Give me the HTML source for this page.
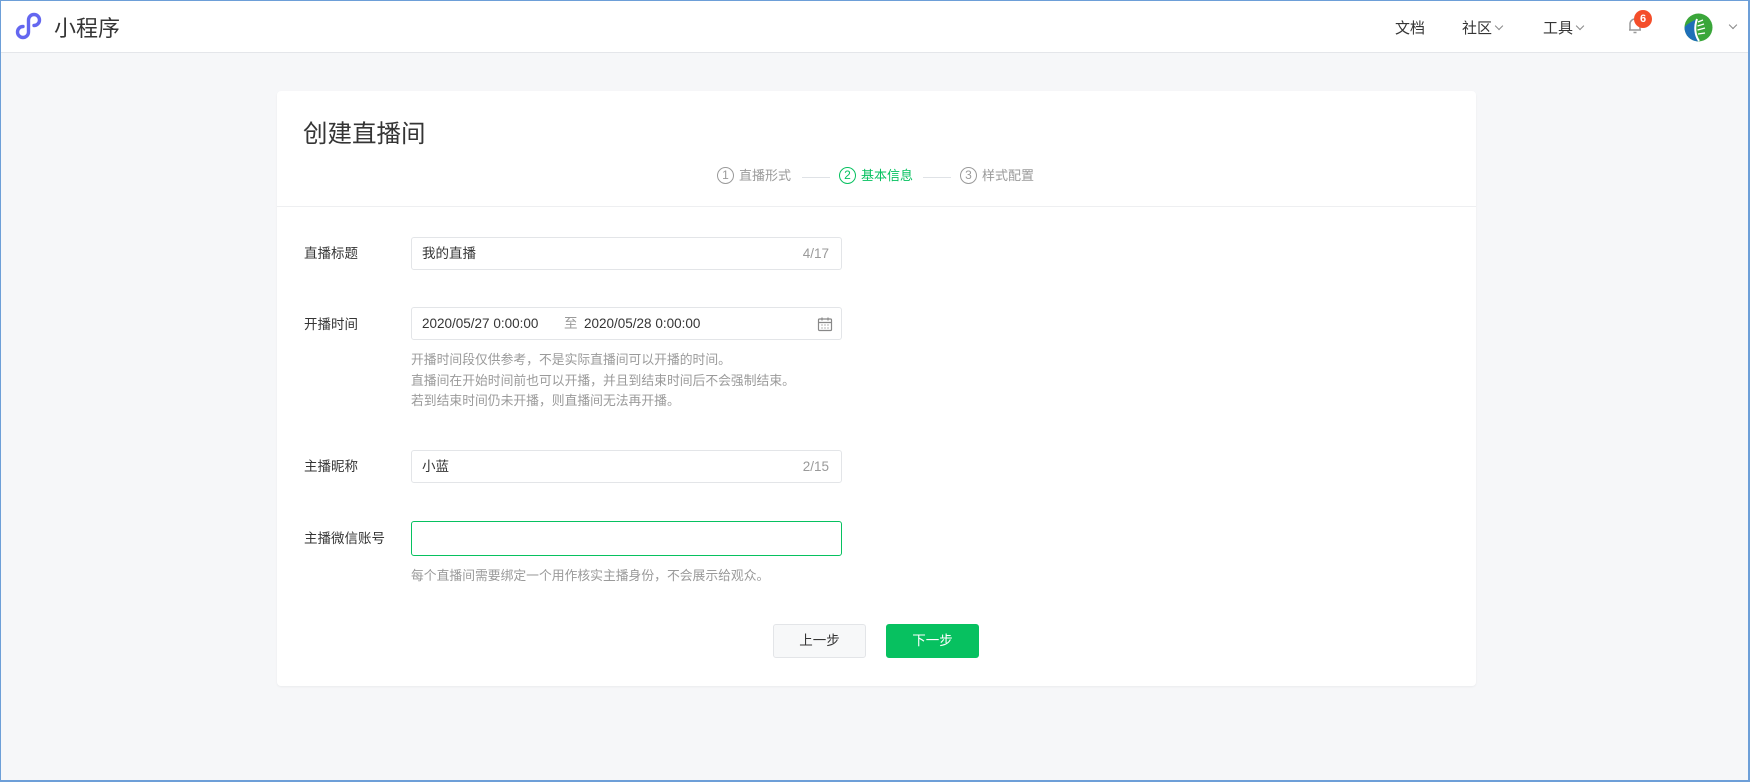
<!DOCTYPE html>
<html><head><meta charset="utf-8"><style>
*{box-sizing:border-box;margin:0;padding:0}
body{width:1750px;height:782px;overflow:hidden;background:#f6f7f9;font-family:"Liberation Sans","Noto Sans CJK SC",sans-serif;color:#353535;position:relative}
.frame{position:absolute;inset:0;border:1px solid #6d9fd8;border-right-width:2px;border-bottom-width:2px;pointer-events:none;z-index:5}
.hd{position:absolute;left:0;top:0;width:1750px;height:53px;background:#fff;border-bottom:1px solid #e4e6ea}
.a{position:absolute;white-space:nowrap}
.nav{font-size:15px;color:#353535;top:17px}
.chev{display:inline-block;width:6px;height:6px;border-right:1px solid #888;border-bottom:1px solid #888;transform:rotate(45deg);margin-left:4px;vertical-align:4px}
.card{position:absolute;left:277px;top:91px;width:1199px;height:595px;background:#fff;border-radius:4px;box-shadow:0 1px 2px rgba(0,0,0,.05)}
.lbl{font-size:13.5px;color:#353535}
.inp{position:absolute;left:411px;width:431px;height:33px;border:1px solid #e3e5e8;border-radius:3px;background:#fff;font-size:13.5px;line-height:31px;padding-left:10px}
.cnt{position:absolute;right:12px;top:0;color:#9a9a9a;font-size:13.5px}
.help{font-size:12.8px;color:#9a9a9a;line-height:20.5px;left:411px}
.step{font-size:13px;color:#9a9a9a;top:167px;line-height:18px}
.circ{display:inline-block;width:17px;height:17px;border:1px solid #9a9a9a;border-radius:50%;font-size:12px;line-height:15px;text-align:center;margin-right:5px;vertical-align:top}
.ln{position:absolute;top:177px;height:1px;background:#dfe2e6;width:28px}
.btn{position:absolute;top:624px;width:93px;height:34px;border-radius:3px;font-size:13.5px;line-height:32px;text-align:center}
</style></head><body>
<div class="frame"></div>
<div class="hd">
<svg class="a" style="left:15px;top:12px" width="30" height="28" viewBox="0 0 30 28"><path d="M8 14.5 A5.5 5.5 0 1 0 13.5 20 V8 A5.5 5.5 0 1 1 19 13.5" fill="none" stroke="#6467f0" stroke-width="3.4" stroke-linecap="round"/></svg>
<div class="a" style="left:54px;top:11px;font-size:22px;color:#353535">小程序</div>
<div class="a nav" style="left:1395px">文档</div>
<div class="a nav" style="left:1462px">社区<span class="chev"></span></div>
<div class="a nav" style="left:1543px">工具<span class="chev"></span></div>
<svg class="a" style="left:1626px;top:15px" width="18" height="20" viewBox="0 0 18 20"><path d="M4 15 V9 A5 5 0 0 1 14 9 V15 Z M3 15 H15 M7.5 17.5 H10.5" fill="none" stroke="#9a9a9a" stroke-width="1.5" stroke-linejoin="round"/></svg>
<div class="a" style="left:1634px;top:10px;width:18px;height:18px;border-radius:50%;background:#f44e2a;color:#fff;font-size:11px;font-weight:bold;text-align:center;line-height:18px">6</div>
<svg class="a" style="left:1684px;top:13px" width="29" height="29" viewBox="0 0 29 29"><circle cx="14.5" cy="14.5" r="14" fill="#3aa63a"/><path d="M0.5 14.5 A14 14 0 0 0 14.5 28.5 C11 22 10 15 13 6 C6 9 2 12 0.5 14.5Z" fill="#1e6fb8"/><path d="M13 6 C10 14 11 22 15 28" fill="none" stroke="#fff" stroke-width="2"/><path d="M14 9 L19 7 M13.5 13 L20 11 M13.5 17 L21 15 M14 21 L21 20" stroke="#fff" stroke-width="1.3"/></svg>
<span class="a chev" style="left:1726px;top:22px"></span>
</div>
<div class="card">
<div style="position:absolute;left:0;right:0;top:115px;height:1px;background:#eeeff1"></div>
</div>
<div class="a" style="left:303px;top:115px;font-size:24.5px;color:#353535">创建直播间</div>
<div class="a step" style="left:717px"><span class="circ">1</span>直播形式</div>
<div class="ln" style="left:802px"></div>
<div class="a step" style="left:839px;color:#07c160"><span class="circ" style="border-color:#07c160">2</span>基本信息</div>
<div class="ln" style="left:923px"></div>
<div class="a step" style="left:960px"><span class="circ">3</span>样式配置</div>

<div class="a lbl" style="left:304px;top:242px">直播标题</div>
<div class="inp" style="top:237px">我的直播<span class="cnt" style="line-height:31px">4/17</span></div>

<div class="a lbl" style="left:304px;top:313px">开播时间</div>
<div class="inp" style="top:307px">2020/05/27 0:00:00<span style="position:absolute;left:152px;color:#9a9a9a">至</span><span style="position:absolute;left:172px">2020/05/28 0:00:00</span>
<svg style="position:absolute;right:8px;top:8px" width="16" height="16" viewBox="0 0 16 16"><rect x="1.5" y="3" width="13" height="11.5" rx="1" fill="none" stroke="#888" stroke-width="1.2"/><path d="M1.5 6.5 H14.5 M5 1.5 V4.5 M11 1.5 V4.5" stroke="#888" stroke-width="1.2"/><path d="M4.5 9 h1 M7.5 9 h1 M10.5 9 h1 M4.5 12 h1 M7.5 12 h1 M10.5 12 h1" stroke="#888" stroke-width="1.2"/></svg></div>
<div class="a help" style="top:350px">开播时间段仅供参考，不是实际直播间可以开播的时间。<br>直播间在开始时间前也可以开播，并且到结束时间后不会强制结束。<br>若到结束时间仍未开播，则直播间无法再开播。</div>

<div class="a lbl" style="left:304px;top:455px">主播昵称</div>
<div class="inp" style="top:450px">小蓝<span class="cnt" style="line-height:31px">2/15</span></div>

<div class="a lbl" style="left:304px;top:527px">主播微信账号</div>
<div class="inp" style="top:521px;height:35px;border-color:#07c160;border-width:1.5px"></div>
<div class="a help" style="top:566px">每个直播间需要绑定一个用作核实主播身份，不会展示给观众。</div>

<div class="btn" style="left:773px;background:#f7f8f9;border:1px solid #e3e5e8;color:#353535">上一步</div>
<div class="btn" style="left:886px;background:#07c160;color:#fff;border:1px solid #07c160">下一步</div>
</body></html>
